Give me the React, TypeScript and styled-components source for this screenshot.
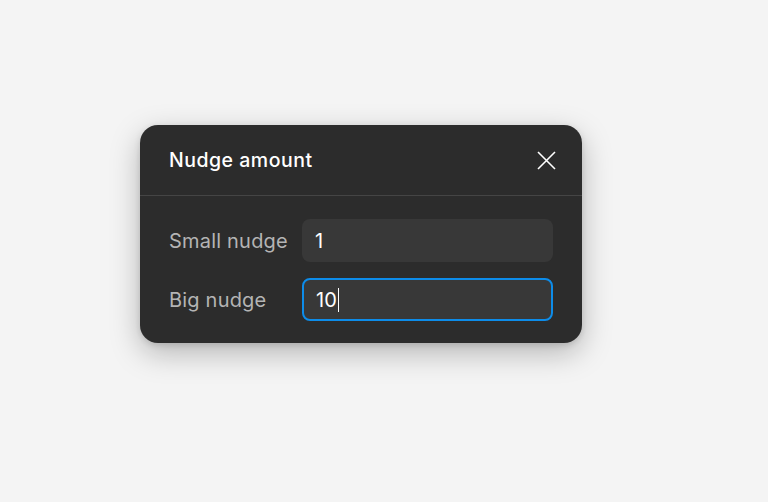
import * as React from 'react';
import styled, { createGlobalStyle } from 'styled-components';

const Global = createGlobalStyle`
  html, body {
    margin: 0;
    padding: 0;
    background: #f4f4f4;
    font-family: Inter, "Noto Sans", sans-serif;
  }
`;

const Page = styled.div`
  width: 768px;
  height: 502px;
  box-sizing: border-box;
  padding: 125px 0 0 140px;
`;

const Dialog = styled.div`
  width: 442px;
  background: #2c2c2c;
  border-radius: 18px;
  box-shadow: 0 10px 30px rgba(0, 0, 0, 0.26), 0 2px 6px rgba(0, 0, 0, 0.12);
  overflow: hidden;
`;

const Header = styled.div`
  height: 70px;
  display: flex;
  align-items: center;
  justify-content: space-between;
  padding: 0 26px 0 29px;
  border-bottom: 1px solid #454545;
`;

const Title = styled.h2`
  margin: 0;
  font-size: 19.5px;
  font-weight: 500;
  color: #ffffff;
  letter-spacing: 0.5px;
`;

const Close = styled.button`
  width: 20px;
  height: 20px;
  padding: 0;
  border: 0;
  background: none;
  display: flex;
  align-items: center;
  justify-content: center;
  cursor: pointer;
`;

const Body = styled.div`
  display: flex;
  flex-direction: column;
  gap: 16px;
  padding: 23px 29px 22px 29px;
`;

const Row = styled.label`
  display: flex;
  align-items: center;
`;

const Label = styled.span`
  width: 133px;
  font-size: 20px;
  letter-spacing: 0.2px;
  color: #b4b4b4;
`;

const Input = styled.div<{ $focused?: boolean }>`
  flex: 1;
  height: 43px;
  box-sizing: border-box;
  display: flex;
  align-items: center;
  padding-left: ${(p) => (p.$focused ? '12px' : '13px')};
  background: #383838;
  border-radius: 8px;
  border: ${(p) => (p.$focused ? '2px solid #0d8ce9' : '0')};
  font-size: 20px;
  color: #ffffff;
`;

const Caret = styled.span`
  display: inline-block;
  width: 1.5px;
  height: 24px;
  background: #ffffff;
  margin-left: 1px;
`;

export default function App() {
  return (
    <>
      <Global />
      <Page>
        <Dialog>
          <Header>
            <Title>Nudge amount</Title>
            <Close aria-label="Close">
              <svg width="19" height="19" viewBox="0 0 19 19">
                <path d="M1 1 L18 18 M18 1 L1 18" stroke="#ffffff" strokeWidth="1.6" fill="none" />
              </svg>
            </Close>
          </Header>
          <Body>
            <Row>
              <Label>Small nudge</Label>
              <Input>1</Input>
            </Row>
            <Row>
              <Label>Big nudge</Label>
              <Input $focused>
                10
                <Caret />
              </Input>
            </Row>
          </Body>
        </Dialog>
      </Page>
    </>
  );
}
